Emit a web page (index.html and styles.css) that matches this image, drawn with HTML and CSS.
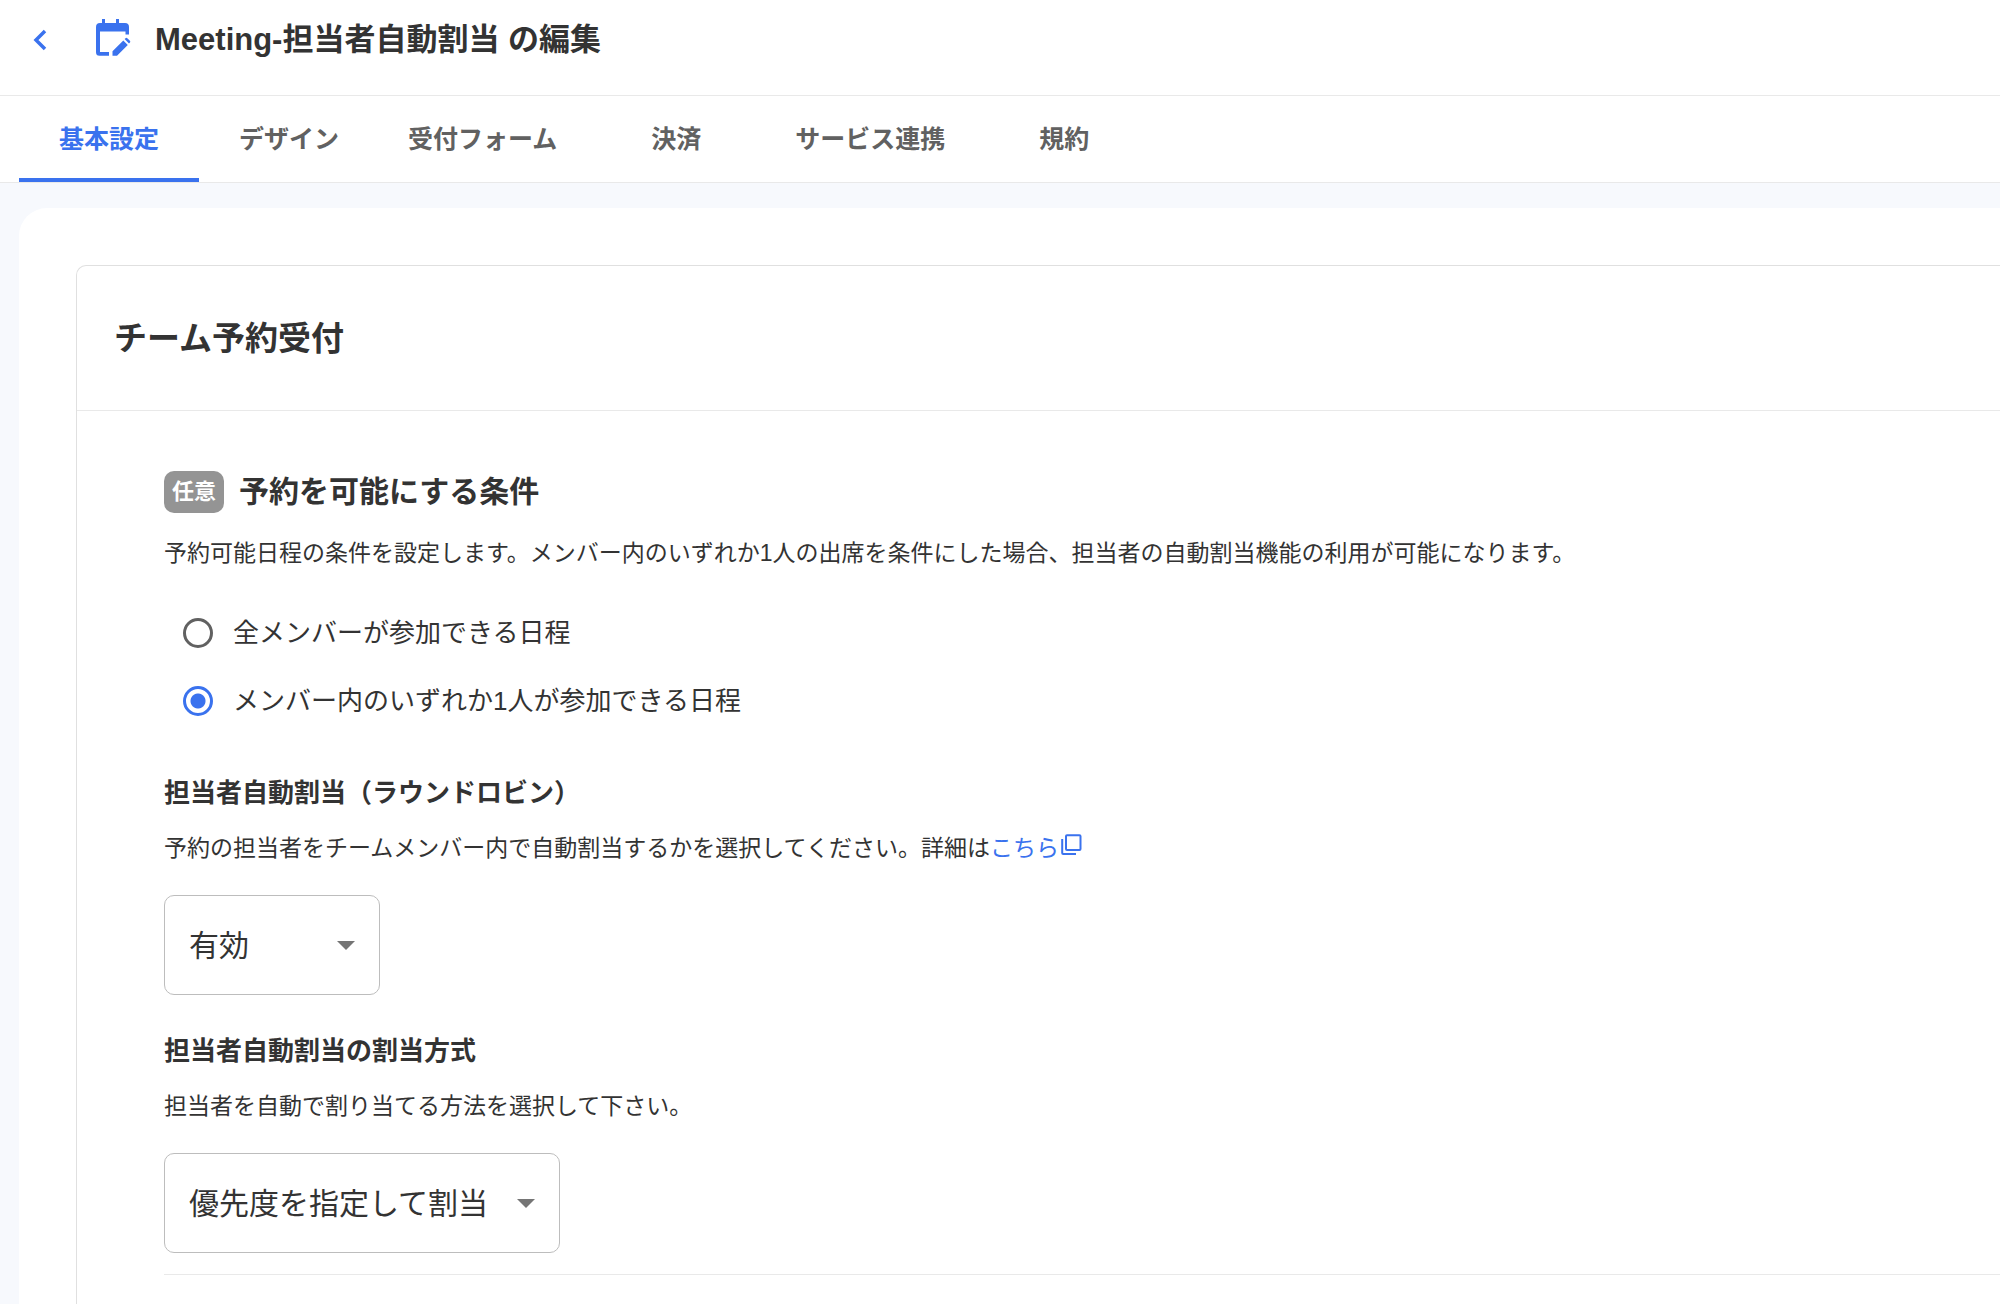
FILE: index.html
```html
<!DOCTYPE html>
<html lang="ja">
<head>
<meta charset="utf-8">
<meta name="viewport" content="width=device-width, initial-scale=1">
<title>Meeting-担当者自動割当 の編集</title>
<link rel="stylesheet" href="styles.css">
</head>
<body>
<header class="header">
  <button class="back" type="button" aria-label="戻る">
    <svg class="back-icon" viewBox="0 0 16 24" aria-hidden="true"><path d="M13 3 4 12l9 9" fill="none" stroke="currentColor" stroke-width="3.500"/></svg>
  </button>
  <svg class="calendar-icon" viewBox="0 0 36 38" aria-hidden="true">
    <path fill="currentColor" d="M6 0h3v4h11V0h3v4h6a4 4 0 0 1 4 4v7.500h-3.500v-3H4V33h9v3.700H3.500A3.500 3.500 0 0 1 0 33.200V8a4 4 0 0 1 4-4h2z"/>
    <path fill="currentColor" d="M16.500 36.700v-4.500L27.300 21.400l4.500 4.500L21 36.700zM28.600 20.100l.9-.9q.9-.9 1.800 0l2.600 2.600q.9.900 0 1.800l-.9.900z"/>
  </svg>
  <h1 class="title">Meeting-担当者自動割当 の編集</h1>
</header>
<nav class="tabs">
  <a class="tab tab-active" href="#basic" aria-current="page">基本設定</a>
  <a class="tab" href="#design">デザイン</a>
  <a class="tab" href="#form">受付フォーム</a>
  <a class="tab" href="#payment">決済</a>
  <a class="tab" href="#services">サービス連携</a>
  <a class="tab" href="#terms">規約</a>
</nav>
<main class="page">
  <section class="panel">
    <h2 class="panel-title">チーム予約受付</h2>
    <div class="panel-body">
      <div class="heading-row">
        <span class="badge">任意</span>
        <h3 class="heading" id="condition">予約を可能にする条件</h3>
      </div>
      <p class="description">予約可能日程の条件を設定します。メンバー内のいずれか1人の出席を条件にした場合、担当者の自動割当機能の利用が可能になります。</p>
      <div class="radios" role="radiogroup" aria-labelledby="condition">
        <label class="radio-row"><input class="radio" type="radio" name="condition">全メンバーが参加できる日程</label>
        <label class="radio-row"><input class="radio" type="radio" name="condition" checked>メンバー内のいずれか1人が参加できる日程</label>
      </div>
      <div class="field">
        <label class="field-label" for="auto">担当者自動割当（ラウンドロビン）</label>
        <p class="description">予約の担当者をチームメンバー内で自動割当するかを選択してください。詳細は<a class="link" href="#help">こちら<svg class="link-icon" viewBox="0 0 22 22" aria-hidden="true"><path d="M6 1.200h12.500a1 1 0 0 1 1 1V15a1 1 0 0 1-1 1H6a1 1 0 0 1-1-1V2.200a1 1 0 0 1 1-1zM1.200 5v14a1 1 0 0 0 1 1H15" fill="none" stroke="currentColor" stroke-width="2"/></svg></a></p>
        <div class="select-box">
          <select class="select" id="auto"><option>有効</option></select>
          <svg class="arrow" viewBox="0 0 18 9" aria-hidden="true"><path d="M0 0h18L9 9z" fill="currentColor"/></svg>
        </div>
      </div>
      <div class="field">
        <label class="field-label" for="method">担当者自動割当の割当方式</label>
        <p class="description">担当者を自動で割り当てる方法を選択して下さい。</p>
        <div class="select-box select-box-wide">
          <select class="select" id="method"><option>優先度を指定して割当</option></select>
          <svg class="arrow" viewBox="0 0 18 9" aria-hidden="true"><path d="M0 0h18L9 9z" fill="currentColor"/></svg>
        </div>
      </div>
      <hr class="divider">
    </div>
  </section>
</main>
</body>
</html>
```
FILE: styles.css
```css
* {
  box-sizing: border-box;
}

body {
  margin: 0;
  min-height: 100vh;
  display: flex;
  flex-direction: column;
  background: #f7f9fd;
  color: #333;
  font-family: "Liberation Sans", "Noto Sans CJK JP", sans-serif;
}

h1, h2, h3, p {
  margin: 0;
}

.header {
  display: flex;
  align-items: flex-start;
  padding: 19px 32px 35px;
  background: #fff;
  border-bottom: 1px solid #e9e9e9;
}

.back {
  display: flex;
  align-items: center;
  width: 64px;
  height: 41px;
  padding: 0;
  border: 0;
  background: none;
  color: #3a72ee;
  cursor: pointer;
}

.back-icon {
  width: 16px;
  height: 24px;
}

.calendar-icon {
  width: 36px;
  height: 38px;
  color: #3a72ee;
}

.title {
  margin-left: 23px;
  font-size: 31px;
  line-height: 41px;
}

.tabs {
  display: flex;
  padding: 0 19px;
  background: #fff;
  border-bottom: 1px solid #e9e9e9;
}

.tab {
  min-width: 180px;
  padding: 23px 29px 19px;
  border-bottom: 4px solid transparent;
  color: #616161;
  font-size: 25px;
  font-weight: 700;
  line-height: 40px;
  text-align: center;
  text-decoration: none;
}

.tab-active {
  border-bottom-color: #3a72ee;
  color: #3a72ee;
}

.page {
  flex: 1;
  display: flex;
  flex-direction: column;
  margin: 25px 0 0 19px;
  padding: 57px 0 0 57px;
  background: #fff;
  border-top-left-radius: 28px;
}

.panel {
  flex: 1;
  border: solid #e0e0e0;
  border-width: 1px 0 0 1px;
  border-top-left-radius: 10px;
}

.panel-title {
  padding: 53px 37px 51px;
  border-bottom: 1px solid #e9e9e9;
  font-size: 33px;
  line-height: 40px;
}

.panel-body {
  padding: 60px 0 28px 87px;
}

.heading-row {
  display: flex;
  align-items: center;
  gap: 15px;
  margin-bottom: 20px;
}

.badge {
  padding: 0 8px;
  border-radius: 10px;
  background: #949494;
  color: #fff;
  font-size: 22px;
  font-weight: 700;
  line-height: 42px;
}

.heading {
  font-size: 30px;
  line-height: 42px;
}

.description {
  font-size: 23px;
  line-height: 40px;
}

.radios {
  display: flex;
  flex-direction: column;
  gap: 28px;
  margin: 40px 0 52px 19px;
}

.radio-row {
  display: flex;
  align-items: center;
  gap: 20px;
  font-size: 26px;
  line-height: 40px;
}

.radio {
  appearance: none;
  width: 30px;
  height: 30px;
  margin: 0;
  border: 3px solid #616161;
  border-radius: 50%;
}

.radio:checked {
  border-color: #3a72ee;
  background: radial-gradient(circle, #3a72ee 7px, transparent 8px);
}

.field {
  margin-bottom: 36px;
}

.field-label {
  display: block;
  margin-bottom: 15px;
  font-size: 26px;
  font-weight: 700;
  line-height: 40px;
}

.link {
  color: #3a72ee;
  text-decoration: none;
}

.link-icon {
  width: 22px;
  height: 22px;
  margin-left: 2px;
}

.select-box {
  display: grid;
  align-items: center;
  width: 216px;
  margin-top: 27px;
}

.select-box-wide {
  width: 396px;
}

.select {
  grid-area: 1 / 1;
  appearance: none;
  height: 100px;
  padding: 0 60px 0 24px;
  border: 1px solid #bdbdbd;
  border-radius: 10px;
  background: #fff;
  color: #333;
  font: inherit;
  font-size: 30px;
}

.arrow {
  grid-area: 1 / 1;
  justify-self: end;
  width: 18px;
  height: 9px;
  margin-right: 25px;
  color: #757575;
  pointer-events: none;
}

.divider {
  margin: -15px 0 0;
  border: 0;
  border-top: 1px solid #e9e9e9;
}
```
